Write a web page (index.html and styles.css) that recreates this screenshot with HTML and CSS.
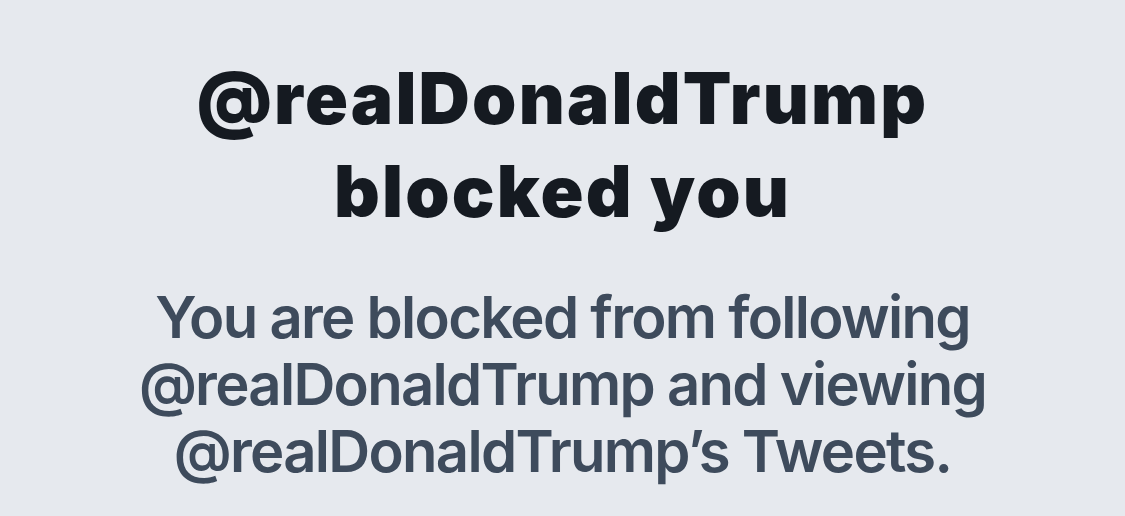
FILE: index.html
```html
<!DOCTYPE html>
<html lang="en">
<head>
<meta charset="utf-8">
<title>Blocked</title>
<link rel="stylesheet" href="styles.css">
</head>
<body>
<main class="blocked">
  <h1 class="blocked-title">@realDonaldTrump blocked you</h1>
  <p class="blocked-text">You are blocked from following @realDonaldTrump and viewing @realDonaldTrump’s Tweets.</p>
</main>
</body>
</html>
```
FILE: styles.css
```css
html, body {
  margin: 0;
  padding: 0;
  background: #e6e9ee;
}
body {
  font-family: Inter, "Noto Sans", sans-serif;
  height: 516px;
  overflow: hidden;
}
.blocked {
  display: flex;
  flex-direction: column;
  align-items: center;
  padding-top: 52px;
}
.blocked-title {
  margin: 0;
  max-width: 900px;
  text-align: center;
  font-size: 71px;
  line-height: 93px;
  font-weight: 900;
  color: #151a21;
  letter-spacing: 2.2px;
}
.blocked-text {
  margin: 46px 0 0;
  max-width: 870px;
  text-align: center;
  font-size: 58px;
  line-height: 67px;
  font-weight: 600;
  color: #3e4b5c;
  letter-spacing: -1.7px;
}
```
